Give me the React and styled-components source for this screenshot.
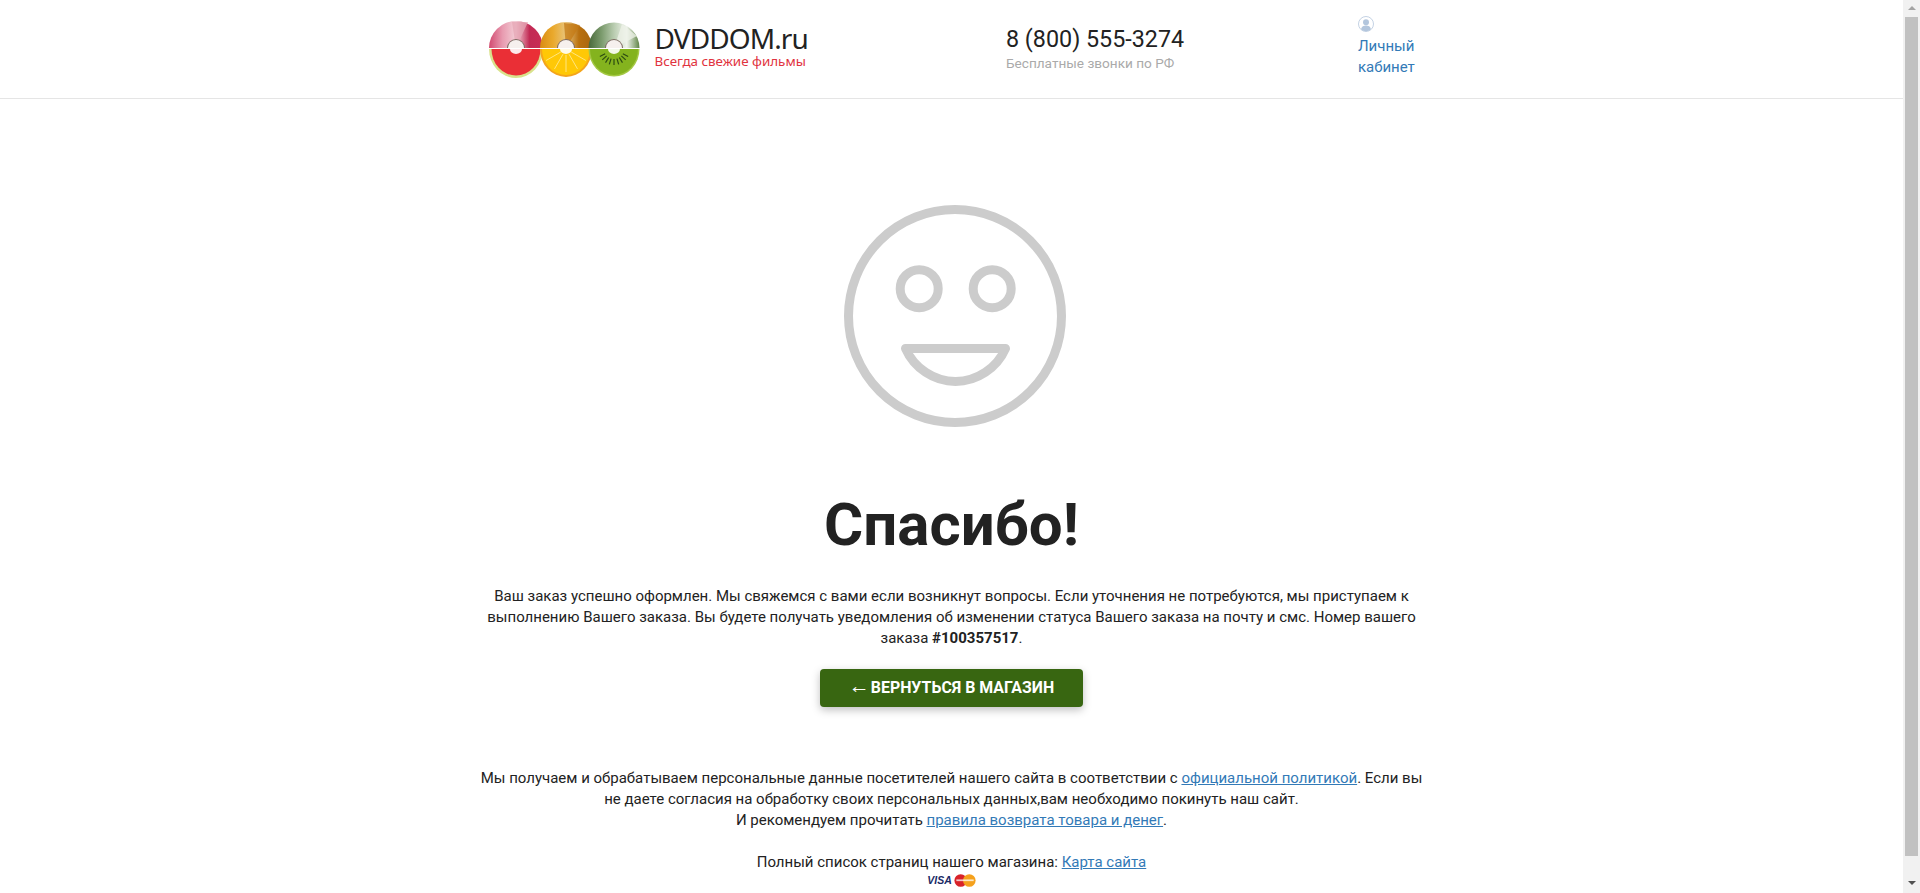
import styled, { createGlobalStyle } from 'styled-components'

const GlobalStyle = createGlobalStyle`
    html, body {
        margin: 0;
        height: 100%;
        overflow: hidden;
        background: #fff;
        font-family: Roboto, "Liberation Sans", sans-serif;
        font-size: 15px;
        line-height: 21px;
        color: #222;
    }
`

function FruitDisc({ id, cx, r, top, rim, flesh, wedges, fleshRadius, children }) {
    const cy = 29
    const fr = fleshRadius
    return (
        <g>
            <defs>
                <linearGradient id={id} x1="0" y1="0" x2="1" y2="0">
                    {top.map((c, i) => (
                        <stop key={i} offset={i / (top.length - 1)} stopColor={c} />
                    ))}
                </linearGradient>
            </defs>
            <path d={`M${cx - r} ${cy - 1}A${r} ${r} 0 0 1 ${cx + r} ${cy - 1}Z`} fill={`url(#${id})`} />
            {wedges.map((w, i) => (
                <path key={i} d={`M${cx} ${cy - 1}L${cx + w[0]} ${cy - w[1]}L${cx + w[2]} ${cy - w[3]}Z`} fill={w[4]} opacity="0.75" />
            ))}
            <path d={`M${cx - r} ${cy}A${r} ${r + 2} 0 0 0 ${cx + r} ${cy}Z`} fill={rim} />
            <path d={`M${cx - fr} ${cy}A${fr} ${fr + 2} 0 0 0 ${cx + fr} ${cy}Z`} fill={flesh} />
            {children}
            <path d={`M${cx - 9} ${cy - 1}A9 9 0 0 1 ${cx + 9} ${cy - 1}Z`} fill="#7d6a62" />
            <path d={`M${cx - 8} ${cy - 1}A8 8 0 0 1 ${cx + 8} ${cy - 1}Z`} fill="#f6f0ee" />
            <path d={`M${cx - 6} ${cy}A6 5 0 0 0 ${cx + 6} ${cy}Z`} fill="#fff" opacity="0.9" />
        </g>
    )
}

function rays(cx, angles, from, to) {
    return angles.map(a => {
        const rad = (a * Math.PI) / 180
        return {
            key: a,
            x1: cx + Math.sin(rad) * from,
            y1: 29 + Math.cos(rad) * from,
            x2: cx + Math.sin(rad) * to,
            y2: 29 + Math.cos(rad) * to,
        }
    })
}

function LogoDiscs() {
    const seeds = [-62, -47, -32, -17, 0, 17, 32, 47, 62]
    const segments = [-60, -30, 0, 30, 60]
    return (
        <LogoArt viewBox="0 0 152 60">
            <FruitDisc
                id="discRed"
                cx={28}
                r={27}
                top={['#d24a70', '#e89bb0', '#f3ced6', '#c22a54', '#c92c55']}
                wedges={[[-4, 27, 12, 27, '#e6a6b4']]}
                rim="#d9e28c"
                flesh="#ea2f36"
                fleshRadius={24.5}
            />
            <FruitDisc
                id="discOrange"
                cx={78}
                r={26}
                top={['#d98c12', '#eaa92c', '#e8c47c', '#b9700f', '#a8660f']}
                wedges={[[-2, 26, 14, 24, '#c47a14']]}
                rim="#f4a51c"
                flesh="#ffc806"
                fleshRadius={24}
            >
                {rays(78, segments, 6, 23).map(({ key, ...line }) => (
                    <line key={key} {...line} stroke="#ffe680" strokeWidth="1" />
                ))}
            </FruitDisc>
            <FruitDisc
                id="discGreen"
                cx={126}
                r={25.5}
                top={['#48683a', '#7a9a6c', '#b9ccb0', '#f0f4ec', '#5f8446']}
                wedges={[[8, 25, 23, 13, '#eef2e8']]}
                rim="#a4c844"
                flesh="#84b31e"
                fleshRadius={24}
            >
                {rays(126, seeds, 10, 16).map(({ key, ...line }) => (
                    <line key={key} {...line} stroke="#2c4a12" strokeWidth="1.2" />
                ))}
            </FruitDisc>
        </LogoArt>
    )
}

function Smile() {
    return (
        <SmileArt viewBox="0 0 240 240" fill="none" stroke="#ccc" strokeWidth="9">
            <circle cx="123" cy="120" r="106.5" />
            <circle cx="87.2" cy="92.7" r="19" />
            <circle cx="160.2" cy="92.7" r="19" />
            <path
                d="M73.5 152.5H173.5C165 172 145 185.5 123.5 185.5C102 185.5 82 172 73.5 152.5Z"
                strokeLinejoin="round"
            />
        </SmileArt>
    )
}

function UserIcon() {
    return (
        <UserArt viewBox="0 0 16 16">
            <circle cx="8" cy="8" r="7.5" fill="#fff" stroke="#c4d2e4" />
            <circle cx="8" cy="6.2" r="3" fill="#b3c6dd" />
            <path d="M3 13.2C3.6 10.6 5.6 9.6 8 9.6S12.4 10.6 13 13.2A7 7 0 0 1 3 13.2Z" fill="#b3c6dd" />
        </UserArt>
    )
}

function MasterCard() {
    return (
        <CardArt viewBox="0 0 20 12">
            <circle cx="6" cy="6" r="5.8" fill="#d8232a" />
            <circle cx="14" cy="6" r="5.8" fill="#f5a11c" />
            <rect x="2" y="5" width="16" height="1.6" fill="#fff" opacity="0.75" />
        </CardArt>
    )
}

export default function App() {
    return (
        <Screen>
            <GlobalStyle />
            <Page>
                <Header>
                    <HeaderInner>
                        <Logo>
                            <LogoDiscs />
                            <Brand>
                                <BrandName>DVDDOM.ru</BrandName>
                                <BrandSlogan>Всегда свежие фильмы</BrandSlogan>
                            </Brand>
                        </Logo>
                        <Contacts>
                            <Phone>8 (800) 555-3274</Phone>
                            <PhoneNote>Бесплатные звонки по РФ</PhoneNote>
                        </Contacts>
                        <Account>
                            <UserIcon />
                            <AccountLink href="#">Личный кабинет</AccountLink>
                        </Account>
                    </HeaderInner>
                </Header>

                <Content>
                    <Smile />
                    <Title>Спасибо!</Title>
                    <Message>
                        Ваш заказ успешно оформлен. Мы свяжемся с вами если возникнут вопросы. Если уточнения не
                        потребуются, мы приступаем к выполнению Вашего заказа. Вы будете получать уведомления об
                        изменении статуса Вашего заказа на почту и смс. Номер вашего заказа <b>#100357517</b>.
                    </Message>
                    <BackButton href="#"><BackArrow>←</BackArrow> Вернуться в магазин</BackButton>
                    <Legal>
                        Мы получаем и обрабатываем персональные данные посетителей нашего сайта в соответствии с{' '}
                        <a href="#">официальной политикой</a>. Если вы не даете согласия на обработку своих
                        персональных данных,вам необходимо покинуть наш сайт.
                        <br />
                        И рекомендуем прочитать <a href="#">правила возврата товара и денег</a>.
                        <br />
                        <br />
                        Полный список страниц нашего магазина: <a href="#">Карта сайта</a>
                    </Legal>
                    <Payments>
                        <Visa>VISA</Visa>
                        <MasterCard />
                    </Payments>
                </Content>
            </Page>
            <Scrollbar>
                <ArrowUp />
                <Thumb />
                <ArrowDown />
            </Scrollbar>
        </Screen>
    )
}

const Screen = styled.div`
    display: flex;
    height: 100vh;
    overflow: hidden;
`

const Page = styled.div`
    flex: 1;
    min-width: 0;
`

const Header = styled.header`
    height: 98px;
    border-bottom: 1px solid #e5e5e5;
`

const HeaderInner = styled.div`
    display: grid;
    grid-template-columns: 518.5px 352px 90px;
    width: 970px;
    height: 100%;
    margin: 0 auto;
    padding-left: 21px;
    box-sizing: border-box;
`

const Logo = styled.div`
    display: flex;
    align-items: flex-start;
    padding-top: 20px;
`

const LogoArt = styled.svg`
    width: 152px;
    height: 60px;
    flex: none;
`

const Brand = styled.div`
    margin-left: 15px;
    padding-top: 2px;
`

const BrandName = styled.div`
    font-family: "Noto Sans", sans-serif;
    font-size: 28px;
    line-height: 32px;
    letter-spacing: -0.9px;
    color: #222;
    white-space: nowrap;
`

const BrandSlogan = styled.div`
    font-family: "Noto Sans", sans-serif;
    font-size: 13.4px;
    line-height: 14px;
    color: #e13340;
    white-space: nowrap;
`

const Contacts = styled.div`
    padding-top: 24px;
`

const Phone = styled.div`
    font-size: 23.3px;
    line-height: 30px;
    color: #222;
    white-space: nowrap;
`

const PhoneNote = styled.div`
    font-size: 13.6px;
    line-height: 18px;
    color: #aaa;
    white-space: nowrap;
`

const Account = styled.div`
    padding-top: 16px;
`

const UserArt = styled.svg`
    display: block;
    width: 16px;
    height: 16px;
    margin-bottom: 4px;
`

const AccountLink = styled.a`
    display: block;
    width: 70px;
    font-size: 15px;
    line-height: 20.5px;
    color: #337ab7;
    text-decoration: none;
`

const Content = styled.main`
    display: flex;
    flex-direction: column;
    align-items: center;
    width: 970px;
    margin: 0 auto;
    padding: 97px 14px 0;
    box-sizing: border-box;
    text-align: center;
`

const SmileArt = styled.svg`
    display: block;
    width: 240px;
    height: 240px;
`

const Title = styled.h1`
    margin: 56px 0 28px;
    font-size: 60px;
    font-weight: 700;
    line-height: 66px;
    color: #222;
`

const Message = styled.p`
    margin: 0 0 20px;
`

const BackButton = styled.a`
    display: block;
    width: 263px;
    height: 38px;
    line-height: 38px;
    border-radius: 4px;
    background: #386611;
    box-shadow: 0 3px 8px rgba(0, 0, 0, 0.25);
    color: #fff;
    font-size: 15.9px;
    font-weight: 700;
    text-transform: uppercase;
    text-decoration: none;
`

const BackArrow = styled.span`
    margin-right: -3px;
    font-family: "Liberation Sans", sans-serif;
    font-size: 21px;
    font-weight: 400;
    line-height: 0;
`

const Legal = styled.p`
    margin: 61px 0 1px;

    a {
        color: #337ab7;
        text-decoration: underline;
    }
`

const Payments = styled.div`
    display: flex;
    align-items: center;
    gap: 2px;
    height: 13px;
`

const Visa = styled.span`
    font-family: "Liberation Sans", sans-serif;
    font-size: 10.5px;
    line-height: 13px;
    font-style: italic;
    font-weight: 700;
    color: #1a2a66;
`

const CardArt = styled.svg`
    width: 22px;
    height: 13px;
`

const Scrollbar = styled.aside`
    display: flex;
    flex-direction: column;
    align-items: center;
    flex: none;
    width: 17px;
    background: #f1f1f1;
`

const ArrowUp = styled.div`
    width: 0;
    height: 0;
    margin-top: 6px;
    border-left: 4px solid transparent;
    border-right: 4px solid transparent;
    border-bottom: 4px solid #a3a3a3;
`

const Thumb = styled.div`
    width: 13px;
    height: 839px;
    margin-top: 7px;
    background: #c1c1c1;
`

const ArrowDown = styled.div`
    width: 0;
    height: 0;
    margin-top: 25px;
    border-left: 4px solid transparent;
    border-right: 4px solid transparent;
    border-top: 4px solid #505050;
`
